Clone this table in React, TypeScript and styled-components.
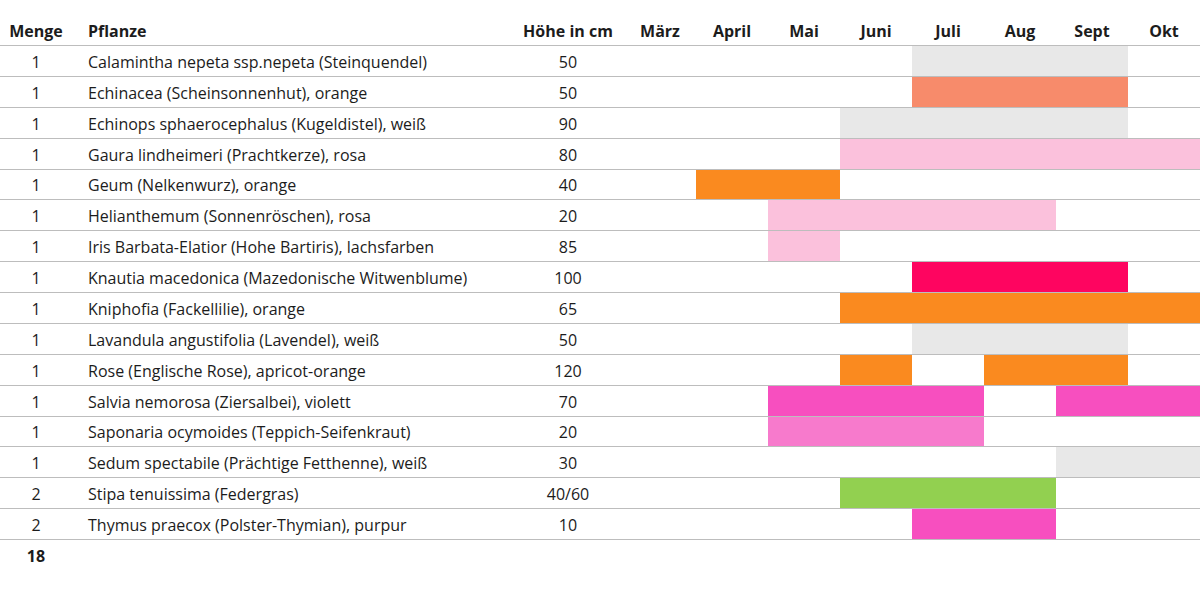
import * as React from "react";
import styled, { createGlobalStyle } from "styled-components";

const GlobalStyle = createGlobalStyle`
  html, body {
    margin: 0;
    padding: 0;
    background: #ffffff;
  }
  body {
    font-family: "Open Sans", "Liberation Sans", sans-serif;
    color: #1c1c1c;
  }
`;

const MONTHS = ["März", "April", "Mai", "Juni", "Juli", "Aug", "Sept", "Okt"];

const C = {
  grey: "#e8e8e8",
  salmon: "#f78b6b",
  rose: "#fbc1dc",
  orange: "#fa8a1f",
  crimson: "#fe0560",
  magenta: "#f74fbf",
  orchid: "#f77acc",
  green: "#92d050",
};

type Plant = {
  qty: number;
  name: string;
  height: string;
  // index 0 = März ... 7 = Okt
  bloom: (string | null)[];
};

const span = (from: number, to: number, color: string, base: (string | null)[] = Array(8).fill(null)) =>
  base.map((c, i) => (i >= from && i <= to ? color : c));

const plants: Plant[] = [
  { qty: 1, name: "Calamintha nepeta ssp.nepeta (Steinquendel)", height: "50", bloom: span(4, 6, C.grey) },
  { qty: 1, name: "Echinacea (Scheinsonnenhut), orange", height: "50", bloom: span(4, 6, C.salmon) },
  { qty: 1, name: "Echinops sphaerocephalus (Kugeldistel), weiß", height: "90", bloom: span(3, 6, C.grey) },
  { qty: 1, name: "Gaura lindheimeri (Prachtkerze), rosa", height: "80", bloom: span(3, 7, C.rose) },
  { qty: 1, name: "Geum (Nelkenwurz), orange", height: "40", bloom: span(1, 2, C.orange) },
  { qty: 1, name: "Helianthemum (Sonnenröschen), rosa", height: "20", bloom: span(2, 5, C.rose) },
  { qty: 1, name: "Iris Barbata-Elatior (Hohe Bartiris), lachsfarben", height: "85", bloom: span(2, 2, C.rose) },
  { qty: 1, name: "Knautia macedonica (Mazedonische Witwenblume)", height: "100", bloom: span(4, 6, C.crimson) },
  { qty: 1, name: "Kniphofia (Fackellilie), orange", height: "65", bloom: span(3, 7, C.orange) },
  { qty: 1, name: "Lavandula angustifolia (Lavendel), weiß", height: "50", bloom: span(4, 6, C.grey) },
  { qty: 1, name: "Rose (Englische Rose), apricot-orange", height: "120", bloom: span(5, 6, C.orange, span(3, 3, C.orange)) },
  { qty: 1, name: "Salvia nemorosa (Ziersalbei), violett", height: "70", bloom: span(6, 7, C.magenta, span(2, 4, C.magenta)) },
  { qty: 1, name: "Saponaria ocymoides (Teppich-Seifenkraut)", height: "20", bloom: span(2, 4, C.orchid) },
  { qty: 1, name: "Sedum spectabile (Prächtige Fetthenne), weiß", height: "30", bloom: span(6, 7, C.grey) },
  { qty: 2, name: "Stipa tenuissima (Federgras)", height: "40/60", bloom: span(3, 5, C.green) },
  { qty: 2, name: "Thymus praecox (Polster-Thymian), purpur", height: "10", bloom: span(4, 5, C.magenta) },
];

const Table = styled.div`
  width: 1200px;
  padding-top: 15px;
`;

const Row = styled.div<{ $head?: boolean }>`
  display: grid;
  grid-template-columns: 72px 440px 112px repeat(8, 72px);
  height: ${({ $head }) => ($head ? "30px" : "29.875px")};
  border-bottom: 1px solid #bdbdbd;
`;

const FootRow = styled.div`
  display: grid;
  grid-template-columns: 72px 1fr;
  height: 30px;
`;

const Cell = styled.div<{ $align?: "left" | "center"; $bold?: boolean }>`
  display: flex;
  align-items: center;
  justify-content: ${({ $align }) => ($align === "left" ? "flex-start" : "center")};
  padding-left: ${({ $align }) => ($align === "left" ? "16px" : "0")};
  padding-top: 2px;
  font-size: 16px;
  font-weight: ${({ $bold }) => ($bold ? 700 : 400)};
  white-space: nowrap;
`;

const Bar = styled.div<{ $color: string | null }>`
  background: ${({ $color }) => $color ?? "transparent"};
`;

export default function App() {
  return (
    <>
      <GlobalStyle />
      <Table>
        <Row $head>
          <Cell $bold>Menge</Cell>
          <Cell $bold $align="left">Pflanze</Cell>
          <Cell $bold>Höhe in cm</Cell>
          {MONTHS.map((m) => (
            <Cell key={m} $bold>
              {m}
            </Cell>
          ))}
        </Row>
        {plants.map((p) => (
          <Row key={p.name}>
            <Cell>{p.qty}</Cell>
            <Cell $align="left">{p.name}</Cell>
            <Cell>{p.height}</Cell>
            {p.bloom.map((c, i) => (
              <Bar key={i} $color={c} />
            ))}
          </Row>
        ))}
        <FootRow>
          <Cell $bold>18</Cell>
        </FootRow>
      </Table>
    </>
  );
}
